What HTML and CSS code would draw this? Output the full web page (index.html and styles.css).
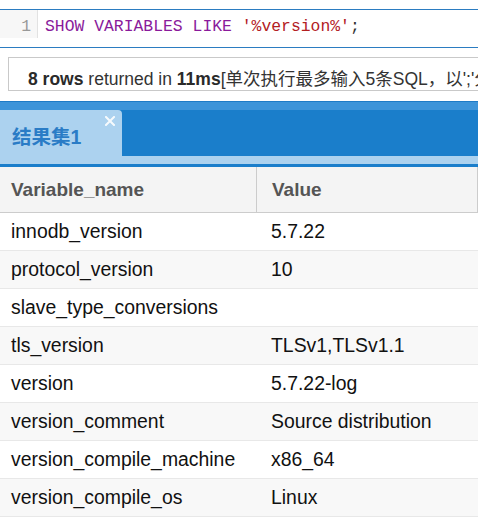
FILE: index.html
```html
<!DOCTYPE html>
<html>
<head>
<meta charset="utf-8">
<link rel="stylesheet" href="styles.css">
</head>
<body>
<div class="editor">
  <div class="code-line">
    <div class="gutter">1</div>
    <div class="code"><span class="kw">SHOW VARIABLES LIKE</span> <span class="str">'%version%'</span><span class="punc">;</span></div>
  </div>
</div>
<div class="status"><b>8 rows</b> returned in <b>11ms</b>[单次执行最多输入5条SQL，以';'分隔]</div>
<div class="panel">
  <div class="panel-top"></div>
  <div class="tabbar">
    <div class="tab">
      <span class="tab-title">结果集1</span>
      <svg class="tab-close" width="10" height="10" viewBox="0 0 10 10"><path d="M1 1L9 9M9 1L1 9" stroke="#ffffff" stroke-width="2" stroke-linecap="square" opacity="0.9"/></svg>
    </div>
  </div>
  <div class="tabstrip"></div>
  <div class="tabline"></div>
  <div class="table">
    <div class="row head"><div class="c1">Variable_name</div><div class="c2">Value</div></div>
    <div class="row"><div class="c1">innodb_version</div><div class="c2">5.7.22</div></div>
    <div class="row alt"><div class="c1">protocol_version</div><div class="c2">10</div></div>
    <div class="row"><div class="c1">slave_type_conversions</div><div class="c2"></div></div>
    <div class="row alt"><div class="c1">tls_version</div><div class="c2">TLSv1,TLSv1.1</div></div>
    <div class="row"><div class="c1">version</div><div class="c2">5.7.22-log</div></div>
    <div class="row alt"><div class="c1">version_comment</div><div class="c2">Source distribution</div></div>
    <div class="row"><div class="c1">version_compile_machine</div><div class="c2">x86_64</div></div>
    <div class="row alt"><div class="c1">version_compile_os</div><div class="c2">Linux</div></div>
  </div>
</div>
</body>
</html>
```
FILE: styles.css
```css
html, body { margin: 0; padding: 0; background: #ffffff; overflow: hidden; }
body { width: 478px; height: 520px; font-family: "Liberation Sans", Arial, "Noto Sans CJK SC", sans-serif; }

.editor {
  margin-top: 9px;
  border-top: 1px solid #2b7cc1;
  border-bottom: 1px solid #2b7cc1;
  height: 37px;
}
.code-line { display: flex; height: 28px; }
.gutter {
  width: 38px;
  border-right: 1px solid #e2e2e2;
  background: #f7f7f7;
  color: #999999;
  font-family: "Liberation Mono", "Courier New", monospace;
  font-size: 16.4px;
  line-height: 23px;
  padding-top: 5px;
  box-sizing: border-box;
  text-align: right;
  padding-right: 6px;
}
.code {
  padding-left: 7px;
  font-family: "Liberation Mono", "Courier New", monospace;
  font-size: 16.4px;
  line-height: 23px;
  padding-top: 5px;
  white-space: pre;
}
.kw { color: #8a1a9b; }
.str { color: #b3201f; }
.punc { color: #333333; }

.status {
  margin: 9px 0 0 8px;
  border: 1px solid #c9c9c9;
  border-right: none;
  padding: 11px 0 0 19px;
  height: 21px;
  font-size: 17.5px;
  line-height: 20px;
  color: #333333;
  white-space: nowrap;
  overflow: hidden;
}
.status b { font-weight: bold; color: #2a2a2a; }

.panel { margin-top: 10px; }
.panel-top { height: 8px; border-top: 1px solid #1e7bc6; background: #3d94d9; }
.tabbar { height: 46px; background: #1a7ecb; display: flex; }
.tab {
  position: relative;
  width: 122px;
  background: #acd2ef;
  border-top-right-radius: 4px;
  display: flex;
  align-items: center;
  padding: 4px 0 0 12px;
  box-sizing: border-box;
}
.tab-title {
  font-weight: bold;
  font-size: 19.5px;
  color: #2a7cc6;
}
.tab-close { position: absolute; left: 105px; top: 6px; }
.tabstrip { height: 8px; background: #acd2ef; }
.tabline { height: 3px; background: #1a7ecb; }

.table { font-size: 19.4px; color: #111111; }
.row {
  display: flex;
  height: 37px;
  border-bottom: 1px solid #e8e8e8;
  align-items: center;
}
.row.alt { background: #f8f8f8; }
.row.head {
  height: 45px;
  background: #f4f4f4;
  border-bottom: 1px solid #cccccc;
  font-weight: bold;
  font-size: 19px;
  color: #555555;
  align-items: stretch;
}
.c1 { width: 256px; padding-left: 11px; box-sizing: border-box; white-space: nowrap; }
.c2 { width: 221px; padding-left: 15px; box-sizing: border-box; white-space: nowrap; }
.head .c1, .head .c2 { display: flex; align-items: center; border-right: 1px solid #cccccc; }
.head .c1 { width: 257px; }
```
